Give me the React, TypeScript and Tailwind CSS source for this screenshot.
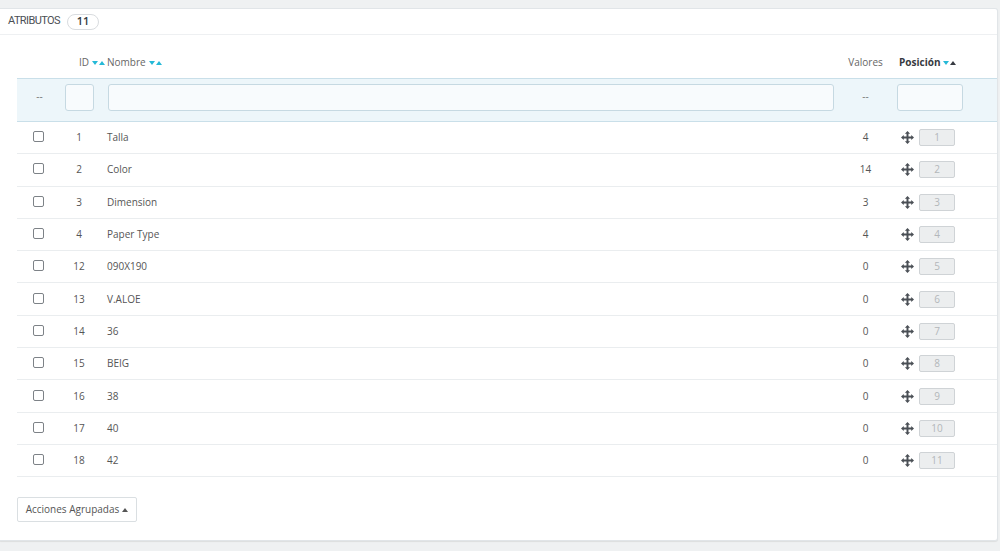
import React from "react";

const rows = [
  { id: 1, name: "Talla", v: 4, p: 1 },
  { id: 2, name: "Color", v: 14, p: 2 },
  { id: 3, name: "Dimension", v: 3, p: 3 },
  { id: 4, name: "Paper Type", v: 4, p: 4 },
  { id: 12, name: "090X190", v: 0, p: 5 },
  { id: 13, name: "V.ALOE", v: 0, p: 6 },
  { id: 14, name: "36", v: 0, p: 7 },
  { id: 15, name: "BEIG", v: 0, p: 8 },
  { id: 16, name: "38", v: 0, p: 9 },
  { id: 17, name: "40", v: 0, p: 10 },
  { id: 18, name: "42", v: 0, p: 11 },
];

function MoveIcon() {
  return (
    <svg width="13" height="13" viewBox="0 0 16 16" className="text-[#4a4f55]">
      <path
        fill="currentColor"
        d="M8 0 L11.2 3.4 H9.2 V6.8 H12.6 V4.8 L16 8 L12.6 11.2 V9.2 H9.2 V12.6 H11.2 L8 16 L4.8 12.6 H6.8 V9.2 H3.4 V11.2 L0 8 L3.4 4.8 V6.8 H6.8 V3.4 H4.8 Z"
      />
    </svg>
  );
}

function Arrows({ activeUp }: { activeUp?: boolean }) {
  return (
    <span className="ml-[3px] inline-flex items-center gap-[1px]">
      <svg width="6" height="4" viewBox="0 0 6 4" className="text-[#25b9d7]">
        <path d="M0 0 H6 L3 4 Z" fill="currentColor" />
      </svg>
      <svg
        width="6"
        height="4"
        viewBox="0 0 6 4"
        className={activeUp ? "text-[#363a41]" : "text-[#25b9d7]"}
      >
        <path d="M0 4 H6 L3 0 Z" fill="currentColor" />
      </svg>
    </span>
  );
}

const grid = "grid grid-cols-[45px_38px_1fr_53px_105px]";

export default function App() {
  return (
    <div
      className="min-h-[551px] w-[1000px] bg-[#eff1f2] pt-[8px] text-[10px] text-[#555]"
      style={{ fontFamily: '"Open Sans", "Liberation Sans", sans-serif' }}
    >
      <div className="mr-[2px] rounded-r-[3px] border border-l-0 border-[#e1e5e8] bg-white shadow-[0_1px_1px_rgba(0,0,0,0.08)]">
        {/* header */}
        <div className="flex h-[26px] items-center border-b border-[#eef0f2] pl-[8px]">
          <span
            className="text-[11px] tracking-[-0.6px] text-[#4b4f54]"
            style={{ fontFamily: 'Roboto, "Liberation Sans", sans-serif' }}
          >
            ATRIBUTOS
          </span>
          <span className="ml-[7px] flex h-[16px] w-[32px] items-center justify-center rounded-full border border-[#d9dcdf] text-[11px] font-semibold text-[#363a41]">
            11
          </span>
        </div>

        <div className="pl-[17px] pt-[10px]">
          {/* column headers */}
          <div className={`${grid} h-[33px] items-center pt-[2px] text-[#666]`}>
            <div />
            <div className="flex items-center whitespace-nowrap pl-[17px]">
              ID
              <Arrows />
            </div>
            <div className="flex items-center pl-[7px]">
              Nombre
              <Arrows />
            </div>
            <div className="text-center">Valores</div>
            <div className="flex items-center pl-[7px] font-bold text-[#363a41]">
              Posición
              <Arrows activeUp />
            </div>
          </div>

          {/* filter row */}
          <div className={`${grid} h-[44px] items-start border-y border-[#c9dfe9] bg-[#edf6fa] pt-[5px]`}>
            <div className="flex h-[24px] items-center justify-center text-[#777]">--</div>
            <div className="pl-[3px]">
              <div className="h-[27px] w-[29px] rounded-[3px] border border-[#c6d9e2] bg-[#f8fbfd]" />
            </div>
            <div className="pl-[8px] pr-[5px]">
              <div className="h-[27px] w-full rounded-[3px] border border-[#c6d9e2] bg-[#f8fbfd]" />
            </div>
            <div className="flex h-[24px] items-center justify-center text-[#777]">--</div>
            <div className="pl-[5px]">
              <div className="h-[27px] w-[66px] rounded-[3px] border border-[#c6d9e2] bg-[#f8fbfd]" />
            </div>
          </div>

          {/* data rows */}
          {rows.map((r) => (
            <div
              key={r.id}
              className={`${grid} h-[32.3px] items-center border-b border-[#eaedef]`}
            >
              <div className="flex justify-center pb-[2px] pr-[2px]">
                <div className="h-[11px] w-[11px] rounded-[2px] border border-[#7d8287] bg-white" />
              </div>
              <div className="pr-[4px] text-center">{r.id}</div>
              <div className="pl-[7px]">{r.name}</div>
              <div className="text-center">{r.v}</div>
              <div className="flex items-center pl-[9px]">
                <MoveIcon />
                <div className="ml-[5px] flex h-[17px] w-[36px] items-center justify-center rounded-[2px] border border-[#cfd3d6] bg-[#eceeef] text-[#b3b7ba]">
                  {r.p}
                </div>
              </div>
            </div>
          ))}

          {/* bulk actions */}
          <div className="pb-[18px] pt-[20px]">
            <div className="flex h-[25px] w-[120px] items-center justify-center rounded-[2px] border border-[#dadfe2] bg-white text-[#555]">
              Acciones Agrupadas
              <svg width="6" height="4" viewBox="0 0 6 4" className="ml-[3px] text-[#555]">
                <path d="M0 4 H6 L3 0 Z" fill="currentColor" />
              </svg>
            </div>
          </div>
        </div>
      </div>
    </div>
  );
}
